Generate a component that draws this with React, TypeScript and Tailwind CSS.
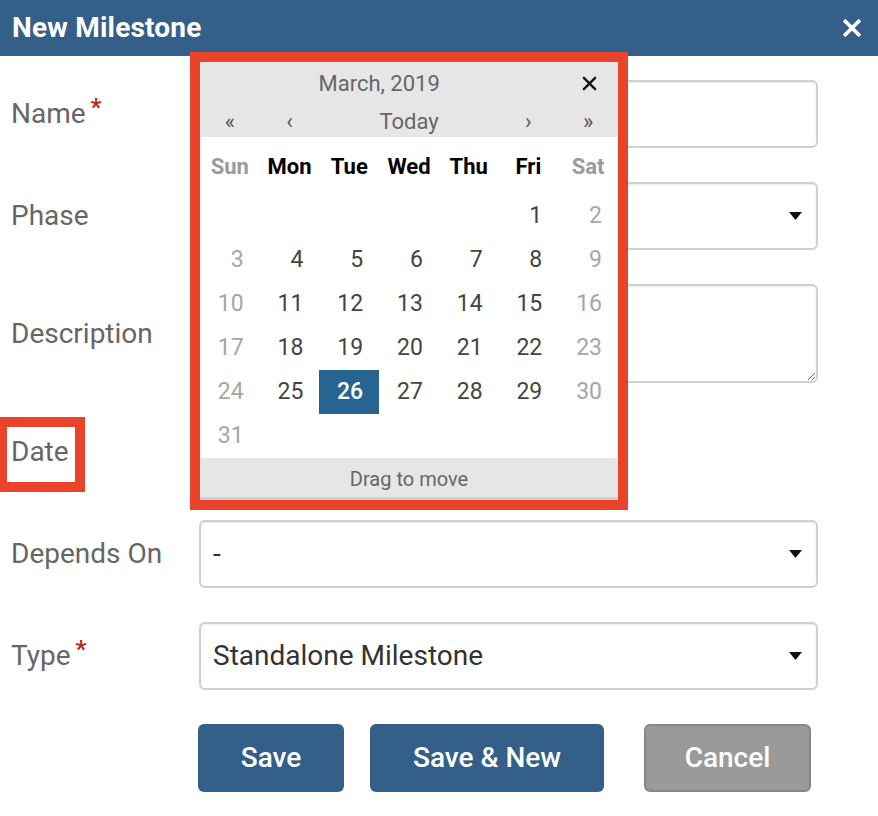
import React from 'react';

const weekdays = ['Sun', 'Mon', 'Tue', 'Wed', 'Thu', 'Fri', 'Sat'];

// March 2019 starts on a Friday
const cells: (number | null)[] = [
  null, null, null, null, null, 1, 2,
  ...Array.from({ length: 29 }, (_, i) => i + 3),
  null, null, null, null, null, null,
];

const Arrow: React.FC = () => (
  <svg width="13" height="8" viewBox="0 0 13 8" className="absolute right-[14px] top-1/2 -translate-y-1/2">
    <path d="M0 0 H13 L6.5 8 Z" fill="#111" />
  </svg>
);

const Cross: React.FC<{ size: number; color: string; stroke: number }> = ({ size, color, stroke }) => (
  <svg width={size} height={size} viewBox="0 0 16 16">
    <path d="M2 2 L14 14 M14 2 L2 14" stroke={color} strokeWidth={stroke} strokeLinecap="round" />
  </svg>
);

const Calendar: React.FC = () => {
  return (
    <div className="absolute left-[190px] top-[52px] w-[438px] border-[10px] border-[#e9442a] bg-white">
      {/* header */}
      <div className="bg-[#e6e6e6]">
        <div className="grid grid-cols-7 h-[38px] items-center pt-[4px]">
          <div className="col-span-6 text-center text-[22px] text-[#666]">March, 2019</div>
          <div className="flex justify-center pl-[2px]">
            <Cross size={15} color="#111" stroke={2.6} />
          </div>
        </div>
        <div className="grid grid-cols-7 h-[37px] items-center text-[#555] text-[22px] pt-[5px]">
          <div className="text-center text-[22px] leading-none">«</div>
          <div className="text-center text-[22px] leading-none">‹</div>
          <div className="col-span-3 text-center text-[#666]">Today</div>
          <div className="text-center text-[22px] leading-none">›</div>
          <div className="text-center text-[22px] leading-none">»</div>
        </div>
      </div>
      {/* weekday names */}
      <div className="grid grid-cols-7 h-[55px] items-center pt-[3px]">
        {weekdays.map((d, i) => (
          <div
            key={d}
            className={`text-center text-[22px] font-bold ${i === 0 || i === 6 ? 'text-[#9a9a9a]' : 'text-black'}`}
          >
            {d}
          </div>
        ))}
      </div>
      {/* days */}
      <div className="grid grid-cols-7 pt-[2px]">
        {cells.map((n, i) => {
          const weekend = i % 7 === 0 || i % 7 === 6;
          const selected = n === 26;
          return (
            <div
              key={i}
              className={`h-[44px] flex items-center justify-end pr-[16px] text-[23px] ${
                selected ? 'bg-[#266591] text-white font-medium' : weekend ? 'text-[#a6a6a6]' : 'text-[#444]'
              }`}
            >
              {n}
            </div>
          );
        })}
      </div>
      {/* footer */}
      <div className="h-[42px] bg-[#e6e6e6] border-b-[3px] border-[#cfcfcf] flex items-center justify-center text-[20px] text-[#666] pt-[2px]">
        Drag to move
      </div>
    </div>
  );
};

const Label: React.FC<{ text: string; required?: boolean }> = ({ text, required }) => (
  <div className="w-[199px] shrink-0 pl-[11px] text-[28px] text-[#666] flex items-start">
    <span>{text}</span>
    {required && <span className="text-[#b8281b] font-bold text-[24px] ml-[5px] -mt-[4px]">*</span>}
  </div>
);

const inputBox = 'h-[68px] w-[619px] rounded-[6px] border-2 border-[#d0d0d0] bg-white shadow-[inset_0_1px_2px_rgba(0,0,0,0.08)]';

const App: React.FC = () => {
  return (
    <div className="w-[878px] h-[816px] bg-white relative overflow-hidden font-['Roboto',sans-serif]">
      {/* title bar */}
      <div className="h-[56px] bg-[#335f88] flex items-center justify-between pl-[12px] pr-[17px]">
        <h1 className="text-white text-[28px] font-bold tracking-[0.2px]">New Milestone</h1>
        <Cross size={18} color="#fff" stroke={3.4} />
      </div>

      <div className="pt-[24px] flex flex-col gap-[34px]">
        <div className="flex items-center">
          <Label text="Name" required />
          <input className={`${inputBox} px-[12px] text-[28px] outline-none`} />
        </div>

        <div className="flex items-center">
          <Label text="Phase" />
          <div className={`${inputBox} relative`}>
            <Arrow />
          </div>
        </div>

        <div className="flex items-center mb-[1px]">
          <Label text="Description" />
          <textarea className="h-[99px] w-[619px] rounded-[6px] border-2 border-[#d0d0d0] bg-white shadow-[inset_0_1px_2px_rgba(0,0,0,0.08)] outline-none" />
        </div>

        <div className="flex items-center h-[68px] relative">
          <Label text="Date" />
          <div className="absolute left-[-3px] top-[-1px] w-[88px] h-[75px] border-[10px] border-[#e9442a]" />
        </div>

        <div className="flex items-center">
          <Label text="Depends On" />
          <div className={`${inputBox} relative flex items-center px-[12px] text-[28px] text-[#333]`}>
            -
            <Arrow />
          </div>
        </div>

        <div className="flex items-center">
          <Label text="Type" required />
          <div className={`${inputBox} relative flex items-center px-[12px] text-[28px] text-[#333]`}>
            Standalone Milestone
            <Arrow />
          </div>
        </div>

        <div className="flex pl-[198px] text-white text-[28px] font-medium">
          <button className="w-[146px] h-[68px] rounded-[6px] bg-[#335f88]">Save</button>
          <button className="ml-[26px] w-[234px] h-[68px] rounded-[6px] bg-[#335f88]">Save &amp; New</button>
          <button className="ml-[40px] w-[167px] h-[68px] rounded-[6px] bg-[#9a9a9a] border-2 border-[#878787]">
            Cancel
          </button>
        </div>
      </div>

      <Calendar />
    </div>
  );
};

export default App;
